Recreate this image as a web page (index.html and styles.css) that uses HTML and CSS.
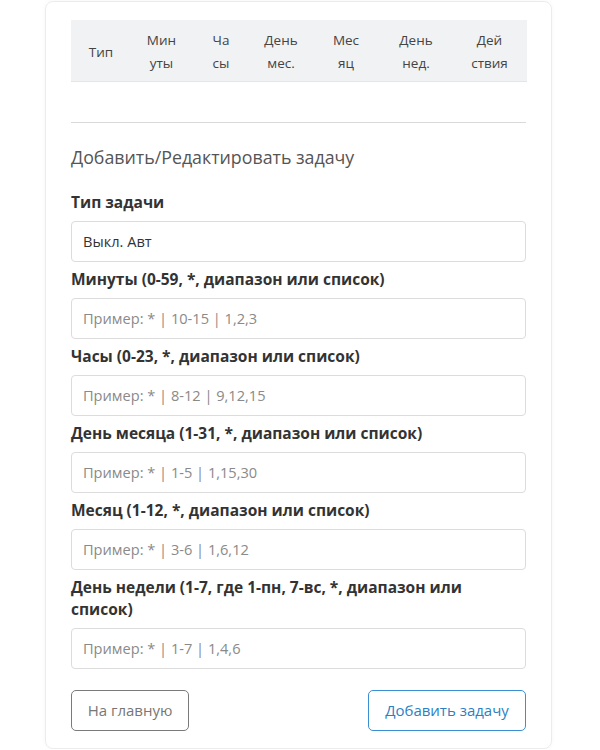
FILE: index.html
```html
<!DOCTYPE html>
<html lang="ru">
<head>
<meta charset="utf-8">
<title>Задачи</title>
<link rel="stylesheet" href="styles.css">
</head>
<body>
<div class="card">
  <table class="tasks">
    <colgroup>
      <col class="c1"><col class="c2"><col class="c3"><col class="c4"><col class="c5"><col class="c6"><col class="c7">
    </colgroup>
    <thead>
      <tr>
        <th>Тип</th>
        <th>Мин<br>уты</th>
        <th>Ча<br>сы</th>
        <th>День<br>мес.</th>
        <th>Мес<br>яц</th>
        <th>День<br>нед.</th>
        <th>Дей<br>ствия</th>
      </tr>
    </thead>
    <tbody></tbody>
  </table>
  <hr class="sep">
  <h2 class="title">Добавить/Редактировать задачу</h2>
  <form class="form">
    <label class="lbl">Тип задачи</label>
    <div class="field">Выкл. Авт</div>
    <label class="lbl">Минуты (0-59, *, диапазон или список)</label>
    <input class="field" placeholder="Пример: * | 10-15 | 1,2,3">
    <label class="lbl">Часы (0-23, *, диапазон или список)</label>
    <input class="field" placeholder="Пример: * | 8-12 | 9,12,15">
    <label class="lbl">День месяца (1-31, *, диапазон или список)</label>
    <input class="field" placeholder="Пример: * | 1-5 | 1,15,30">
    <label class="lbl">Месяц (1-12, *, диапазон или список)</label>
    <input class="field" placeholder="Пример: * | 3-6 | 1,6,12">
    <label class="lbl">День недели (1-7, где 1-пн, 7-вс, *, диапазон или список)</label>
    <input class="field" placeholder="Пример: * | 1-7 | 1,4,6">
    <div class="actions">
      <button type="button" class="btn btn-gray">На главную</button>
      <button type="button" class="btn btn-blue">Добавить задачу</button>
    </div>
  </form>
</div>
</body>
</html>
```
FILE: styles.css
```css
* { box-sizing: border-box; }
html, body { margin: 0; padding: 0; background: #fff; }
body {
  font-family: "Open Sans", "Noto Sans", sans-serif;
  color: #333;
  padding-top: 1px;
}
.card {
  width: 507px;
  margin: 0 0 0 45px;
  border: 1px solid #ececec;
  border-radius: 8px;
  box-shadow: 0 0 4px rgba(0,0,0,0.04);
  padding: 18px 25px 17px;
}
.tasks {
  width: 456px;
  border-collapse: collapse;
  table-layout: fixed;
}
.c1 { width: 60px; } .c2 { width: 61px; } .c3 { width: 58px; }
.c4 { width: 62px; } .c5 { width: 68px; } .c6 { width: 72px; } .c7 { width: 75px; }
.tasks th {
  background: #f1f2f4;
  font-weight: 400;
  font-size: 13.5px;
  line-height: 23px;
  color: #444;
  text-align: center;
  padding: 9px 2px 5px;
  height: 61px;
  border-bottom: 1px solid #e4e5e7;
}
.sep {
  border: 0;
  border-top: 1px solid #d9d9d9;
  margin: 40px 0 0;
}
.title {
  font-size: 17.8px;
  font-weight: 400;
  color: #555;
  margin: 21px 0 21px;
  line-height: 26px;
}
.form { display: flex; flex-direction: column; }
.lbl {
  font-weight: 700;
  font-size: 15.5px;
  line-height: 22px;
  color: #333;
  margin: 0 0 8px;
}
.field {
  display: block;
  width: 100%;
  height: 41px;
  border: 1px solid #dcdcdc;
  border-radius: 4px;
  padding: 0 11px;
  font-family: inherit;
  font-size: 14.6px;
  color: #333;
  line-height: 39px;
  margin: 0 0 6px;
  background: #fff;
}
.field::placeholder { color: #8a8a8a; }
.actions {
  display: flex;
  justify-content: space-between;
  margin-top: 15px;
}
.btn {
  height: 41px;
  border-radius: 5px;
  background: #fff;
  font-family: inherit;
  font-size: 15px;
  padding: 0 10px;
}
.btn-gray { border: 1.5px solid #7a7a7a; color: #777; width: 118px; }
.btn-blue { border: 1.5px solid #3b8fd3; color: #2d7fc4; width: 158px; }
```
